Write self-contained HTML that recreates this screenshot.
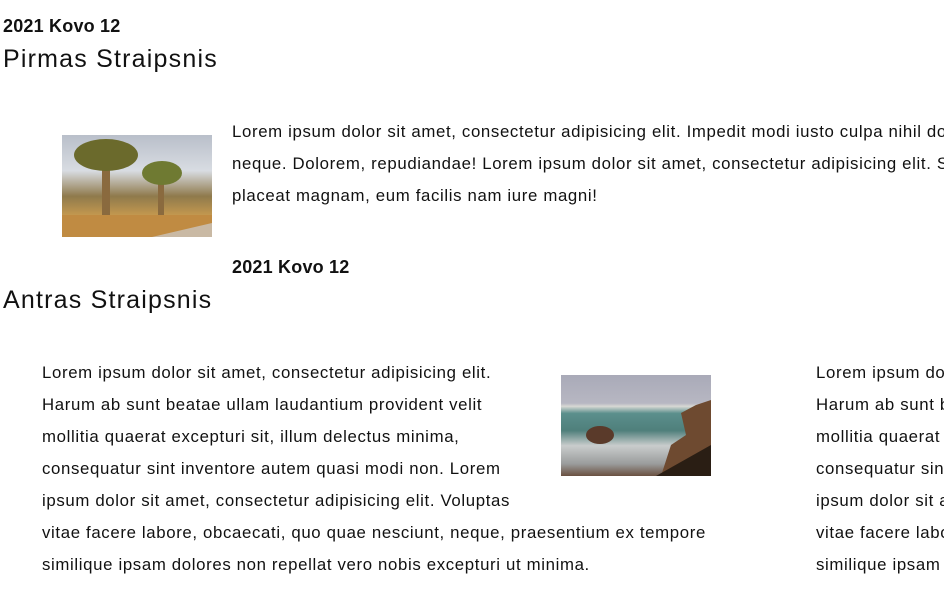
<!DOCTYPE html>
<html><head><meta charset="utf-8"><style>
html,body{margin:0;width:944px;height:597px;overflow:hidden}
body{background:#fff;font-family:"Liberation Sans",sans-serif;color:#111;position:relative}
#w{position:absolute;left:0;top:0;width:944px;height:597px;overflow:hidden}
#w div{position:absolute;white-space:nowrap}
.d{font-size:18px;font-weight:bold;letter-spacing:0.2px}
.h{font-size:25px;letter-spacing:1.2px}
.t{font-size:16.8px;letter-spacing:0.65px;line-height:32px}
</style></head><body><div id="w">
<div class="d" style="left:3px;top:16px">2021 Kovo 12</div>
<div class="h" style="left:3px;top:45px">Pirmas Straipsnis</div>
<div style="left:62px;top:135px;width:150px;height:102px;background:linear-gradient(180deg,#b9bfca 0%,#d8dce2 35%,#8f7a4c 60%,#c79a4f 80%,#c0a98a 100%)">
<svg width="150" height="102" style="position:absolute;left:0;top:0"><rect x="40" y="25" width="8" height="77" fill="#8a6a3e"/><ellipse cx="44" cy="20" rx="32" ry="16" fill="#6b6a2c"/><rect x="96" y="40" width="6" height="55" fill="#8a6a3e"/><ellipse cx="100" cy="38" rx="20" ry="12" fill="#6f7a32"/><rect x="0" y="80" width="150" height="22" fill="#c08b42"/><polygon points="90,102 150,88 150,102" fill="#c9b9a4"/></svg></div>
<div class="t" style="left:232px;top:116px">Lorem ipsum dolor sit amet, consectetur adipisicing elit. Impedit modi iusto culpa nihil dolor</div>
<div class="t" style="left:232px;top:148px">neque. Dolorem, repudiandae! Lorem ipsum dolor sit amet, consectetur adipisicing elit. Sint</div>
<div class="t" style="left:232px;top:180px">placeat magnam, eum facilis nam iure magni!</div>
<div class="d" style="left:232px;top:257px">2021 Kovo 12</div>
<div class="h" style="left:3px;top:286px">Antras Straipsnis</div>
<div style="left:561px;top:375px;width:150px;height:101px;background:linear-gradient(180deg,#a9aab8 0%,#b7b7c2 28%,#d8d8d4 31%,#5b8f8c 38%,#4f7f7b 55%,#c9cccc 70%,#9a9c9c 88%,#6a5040 100%)">
<svg width="150" height="101" style="position:absolute;left:0;top:0"><ellipse cx="39" cy="60" rx="14" ry="9" fill="#5a3a2a"/><polygon points="120,38 135,30 150,25 150,101 100,101 110,70 125,60" fill="#6e4a30"/><polygon points="95,101 150,70 150,101" fill="#2a1e14"/></svg></div>
<div class="t" style="left:42px;top:357px">Lorem ipsum dolor sit amet, consectetur adipisicing elit.</div>
<div class="t" style="left:42px;top:389px">Harum ab sunt beatae ullam laudantium provident velit</div>
<div class="t" style="left:42px;top:421px">mollitia quaerat excepturi sit, illum delectus minima,</div>
<div class="t" style="left:42px;top:453px">consequatur sint inventore autem quasi modi non. Lorem</div>
<div class="t" style="left:42px;top:485px">ipsum dolor sit amet, consectetur adipisicing elit. Voluptas</div>
<div class="t" style="left:42px;top:517px">vitae facere labore, obcaecati, quo quae nesciunt, neque, praesentium ex tempore</div>
<div class="t" style="left:42px;top:549px">similique ipsam dolores non repellat vero nobis excepturi ut minima.</div>
<div class="t" style="left:816px;top:357px">Lorem ipsum dolor sit</div>
<div class="t" style="left:816px;top:389px">Harum ab sunt beatae</div>
<div class="t" style="left:816px;top:421px">mollitia quaerat excepturi</div>
<div class="t" style="left:816px;top:453px">consequatur sint inventore</div>
<div class="t" style="left:816px;top:485px">ipsum dolor sit amet</div>
<div class="t" style="left:816px;top:517px">vitae facere labore</div>
<div class="t" style="left:816px;top:549px">similique ipsam dolores</div>
</div></body></html>
